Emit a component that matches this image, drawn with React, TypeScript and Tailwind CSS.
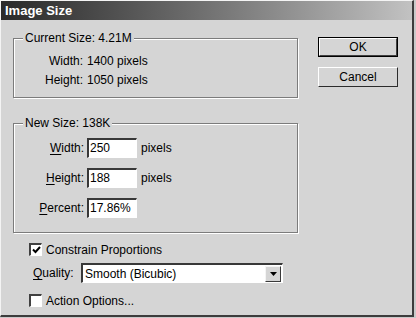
import React from "react";

const font = { fontFamily: '"Liberation Sans", Arial, sans-serif' };

function Field({ value }: { value: string }) {
  return (
    <div className="w-[50px] h-[20px] bg-white border-t-2 border-l-2 border-[#383838] border-b border-r border-b-white border-r-white pl-[1px] text-[12px] leading-[17px] text-black">
      {value}
    </div>
  );
}

function Check({ checked }: { checked: boolean }) {
  return (
    <div className="w-[13px] h-[13px] bg-white border-t-2 border-l-2 border-[#404040] border-b border-r border-b-white border-r-white flex items-center justify-center">
      {checked && (
        <svg width="9" height="8" viewBox="0 0 9 8">
          <path d="M1 3.5 L3.5 6 L8 1" stroke="#000" strokeWidth="2" fill="none" />
        </svg>
      )}
    </div>
  );
}

function Group({ title, children, className }: { title: string; children: React.ReactNode; className?: string }) {
  return (
    <fieldset
      className={
        "w-[285px] border border-[#7c7c7c] shadow-[1px_1px_0_#fff,inset_1px_1px_0_#fff] " + (className ?? "")
      }
    >
      <legend className="ml-[9px] px-[2px] text-[12px] leading-[14px] bg-[#d5d5d5]">{title}</legend>
      {children}
    </fieldset>
  );
}

export default function App() {
  return (
    <div className="w-[416px] h-[318px] bg-[#c9c9c9] text-black" style={font}>
      <div className="w-[414px] h-[317px] flex flex-col bg-[#d5d5d5] border-t border-l border-[#f4f4f4] border-r-2 border-b-2 border-r-[#3c3c3c] border-b-[#3c3c3c]">
        <div className="h-[19px] shrink-0 bg-gradient-to-r from-[#2a2a2a] to-[#c2c2c2] px-[4px] text-white font-bold text-[13px] leading-[19px]">
          Image Size
        </div>
        <div className="flex pt-[11px] pl-[12px]">
          <div className="w-[287px] flex flex-col">
            <Group title="Current Size: 4.21M" className="h-[67px]">
              <div className="grid grid-cols-[69px_auto] gap-x-[4px] pt-[7px] text-[12px] leading-[19px]">
                <div className="text-right">Width:</div>
                <div>1400 pixels</div>
                <div className="text-right">Height:</div>
                <div>1050 pixels</div>
              </div>
            </Group>
            <Group title="New Size: 138K" className="h-[117px] mt-[18px]">
              <div className="flex flex-col gap-[10px] pt-[8px] text-[12px]">
                {[
                  ["W", "idth:", "250", true],
                  ["H", "eight:", "188", true],
                  ["P", "ercent:", "17.86%", false],
                ].map(([k, rest, val, px]) => (
                  <div key={String(k)} className="flex items-center h-[20px]">
                    <div className="w-[73px] text-right pr-[3px]">
                      <span className="underline underline-offset-2">{k}</span>
                      {rest}
                    </div>
                    <Field value={String(val)} />
                    {px && <span className="ml-[4px]">pixels</span>}
                  </div>
                ))}
              </div>
            </Group>
            <div className="flex items-center mt-[10px] pl-[16px] h-[13px] text-[12px]">
              <Check checked />
              <span className="ml-[4px]">Constrain Proportions</span>
            </div>
            <div className="flex items-center mt-[7px] pl-[20px] h-[20px] text-[12px]">
              <span className="w-[48px]">
                <span className="underline underline-offset-2">Q</span>uality:
              </span>
              <div className="w-[202px] h-[20px] flex items-center bg-white border-t-2 border-l-2 border-[#383838] border-b border-r border-b-white border-r-white">
                <span className="flex-1 pl-[2px]">Smooth (Bicubic)</span>
                <div className="w-[16px] h-[16px] mr-[1px] flex items-center justify-center bg-[#d5d5d5] border-t border-l border-[#f4f4f4] border-b border-r border-b-[#3a3a3a] border-r-[#3a3a3a]">
                  <svg width="7" height="4" viewBox="0 0 7 4">
                    <path d="M0 0 H7 L3.5 4 Z" fill="#000" />
                  </svg>
                </div>
              </div>
            </div>
            <div className="flex items-center mt-[11px] pl-[16px] h-[13px] text-[12px]">
              <Check checked={false} />
              <span className="ml-[4px]">Action Options...</span>
            </div>
          </div>
          <div className="ml-[18px] pt-[6px] flex flex-col gap-[10px]">
            <div className="w-[80px] h-[20px] border border-black">
              <div className="h-full flex items-center justify-center border-t border-l border-t-white border-l-white border-b border-r border-b-[#404040] border-r-[#404040] text-[12px]">
                OK
              </div>
            </div>
            <div className="w-[80px] h-[20px] flex items-center justify-center border-t border-l border-t-white border-l-white border-b border-r border-b-[#2c2c2c] border-r-[#2c2c2c] text-[12px]">
              Cancel
            </div>
          </div>
        </div>
      </div>
    </div>
  );
}
